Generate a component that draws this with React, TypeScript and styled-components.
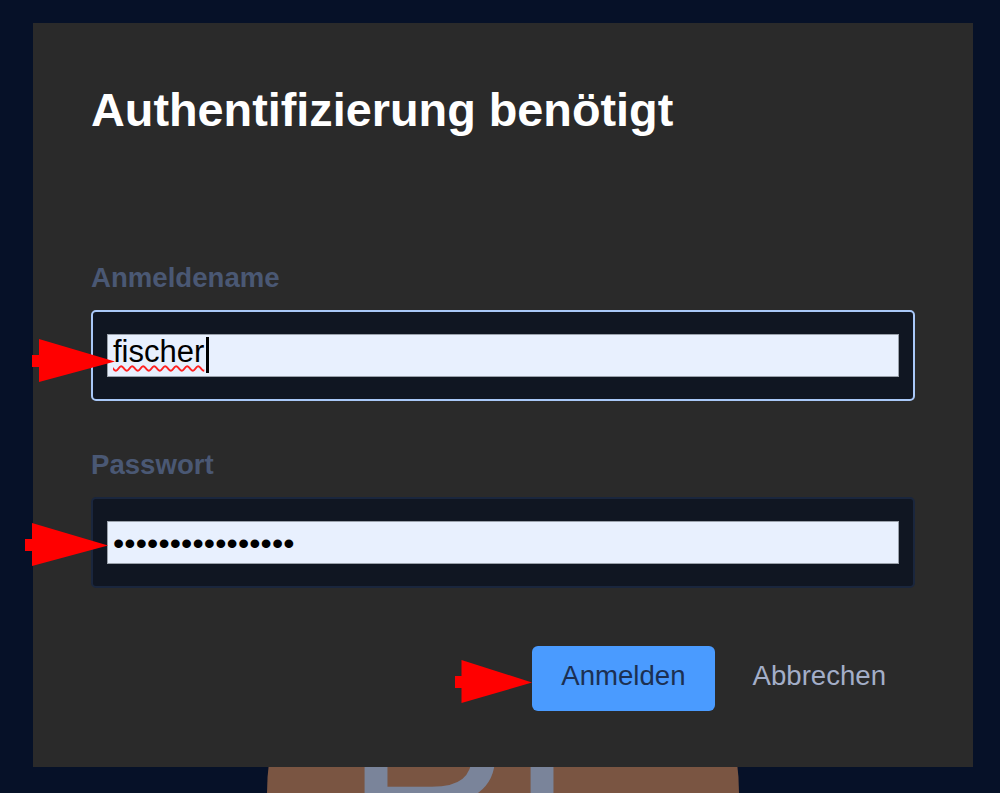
import React from "react";
import styled, { createGlobalStyle } from "styled-components";

const GlobalStyle = createGlobalStyle`
  html, body { margin: 0; padding: 0; background: #061128; }
  body { font-family: "Liberation Sans", Arial, sans-serif; }
  * { box-sizing: border-box; }
`;

const Page = styled.div`
  position: relative;
  width: 1000px;
  height: 793px;
  overflow: hidden;
  background: #061128;
`;

const BackgroundContent = styled.div`
  display: flex;
  justify-content: center;
  padding: 557px 0 0 5px;
`;

const Avatar = styled.div`
  flex: none;
  width: 472px;
  height: 472px;
  border-radius: 50%;
  background: #7a5542;
  display: flex;
  align-items: flex-start;
  padding: 41px 0 0 78px;
  font-family: "Liberation Sans", Arial, sans-serif;
  font-size: 245px;
  line-height: 245px;
  color: #7a849a;
`;

const Overlay = styled.div`
  position: absolute;
  inset: 0;
  display: flex;
  align-items: flex-start;
  padding: 23px 27px 0 33px;
`;

const Dialog = styled.div`
  width: 940px;
  height: 744px;
  background: #2a2a2a;
  padding: 61px 58px 0;
  display: flex;
  flex-direction: column;
`;

const Title = styled.h1`
  margin: 0;
  font-size: 46.8px;
  line-height: 53px;
  font-weight: 700;
  color: #ffffff;
`;

const Form = styled.div`
  display: flex;
  flex-direction: column;
  margin-top: 125px;
`;

const Field = styled.div<{ $gap?: number }>`
  display: flex;
  flex-direction: column;
  gap: 16px;
  margin-top: ${(p) => p.$gap ?? 0}px;
`;

const Label = styled.label`
  font-size: 27.6px;
  line-height: 32px;
  font-weight: 700;
  color: #4a5874;
`;

const InputShell = styled.div<{ $focused?: boolean }>`
  height: 91px;
  border: 2px solid ${(p) => (p.$focused ? "#a9c8f8" : "#1a263d")};
  border-radius: 5px;
  background: #101622;
  padding: 22px 14px;
`;

const InputBox = styled.div`
  height: 43px;
  border: 1px solid #9aa1ab;
  background: #e8f0fe;
  display: flex;
  align-items: center;
  padding-left: 5px;
  font-size: 31px;
  color: #000;
`;

const TypedText = styled.span`
  line-height: 36px;
  margin-bottom: 7px;
  text-decoration: underline wavy #ff2020;
  text-decoration-thickness: 2px;
  text-underline-offset: 3px;
`;

const Caret = styled.span`
  width: 3px;
  height: 36px;
  background: #000;
  margin-left: 2px;
  margin-bottom: 2px;
`;

const Dots = styled.span`
  font-size: 32px;
  letter-spacing: 0.15px;
  line-height: 36px;
`;

const ButtonRow = styled.div`
  display: flex;
  justify-content: flex-end;
  gap: 9px;
  margin-top: 58px;
`;

const Button = styled.button<{ $primary?: boolean }>`
  height: 65px;
  padding: 0 29px 6px;
  border: none;
  border-radius: 6px;
  font-family: "Liberation Sans", Arial, sans-serif;
  font-size: 27.6px;
  background: ${(p) => (p.$primary ? "#4a9bff" : "transparent")};
  color: ${(p) => (p.$primary ? "#1c3052" : "#a3aec8")};
  cursor: pointer;
`;

const ArrowSvg = styled.svg`
  position: absolute;
  height: 43px;
`;

function Arrow({ x, y, w }: { x: number; y: number; w: number }) {
  return (
    <ArrowSvg
      viewBox="0 0 83 43"
      preserveAspectRatio="none"
      style={{ left: x, top: y, width: w }}
    >
      <polygon points="0,16 7,16 7,0 83,22.5 7,43 7,28 0,28" fill="#ff0000" />
    </ArrowSvg>
  );
}

export default function App() {
  return (
    <>
      <GlobalStyle />
      <Page>
        <BackgroundContent>
          <Avatar>BI</Avatar>
        </BackgroundContent>
        <Overlay>
          <Dialog>
            <Title>Authentifizierung benötigt</Title>
            <Form>
              <Field>
                <Label>Anmeldename</Label>
                <InputShell $focused>
                  <InputBox>
                    <TypedText>fischer</TypedText>
                    <Caret />
                  </InputBox>
                </InputShell>
              </Field>
              <Field $gap={48}>
                <Label>Passwort</Label>
                <InputShell>
                  <InputBox>
                    <Dots>••••••••••••••••</Dots>
                  </InputBox>
                </InputShell>
              </Field>
            </Form>
            <ButtonRow>
              <Button $primary>Anmelden</Button>
              <Button>Abbrechen</Button>
            </ButtonRow>
          </Dialog>
        </Overlay>
        <Arrow x={32} y={339} w={83} />
        <Arrow x={25} y={523} w={83} />
        <Arrow x={455} y={660} w={77} />
      </Page>
    </>
  );
}
